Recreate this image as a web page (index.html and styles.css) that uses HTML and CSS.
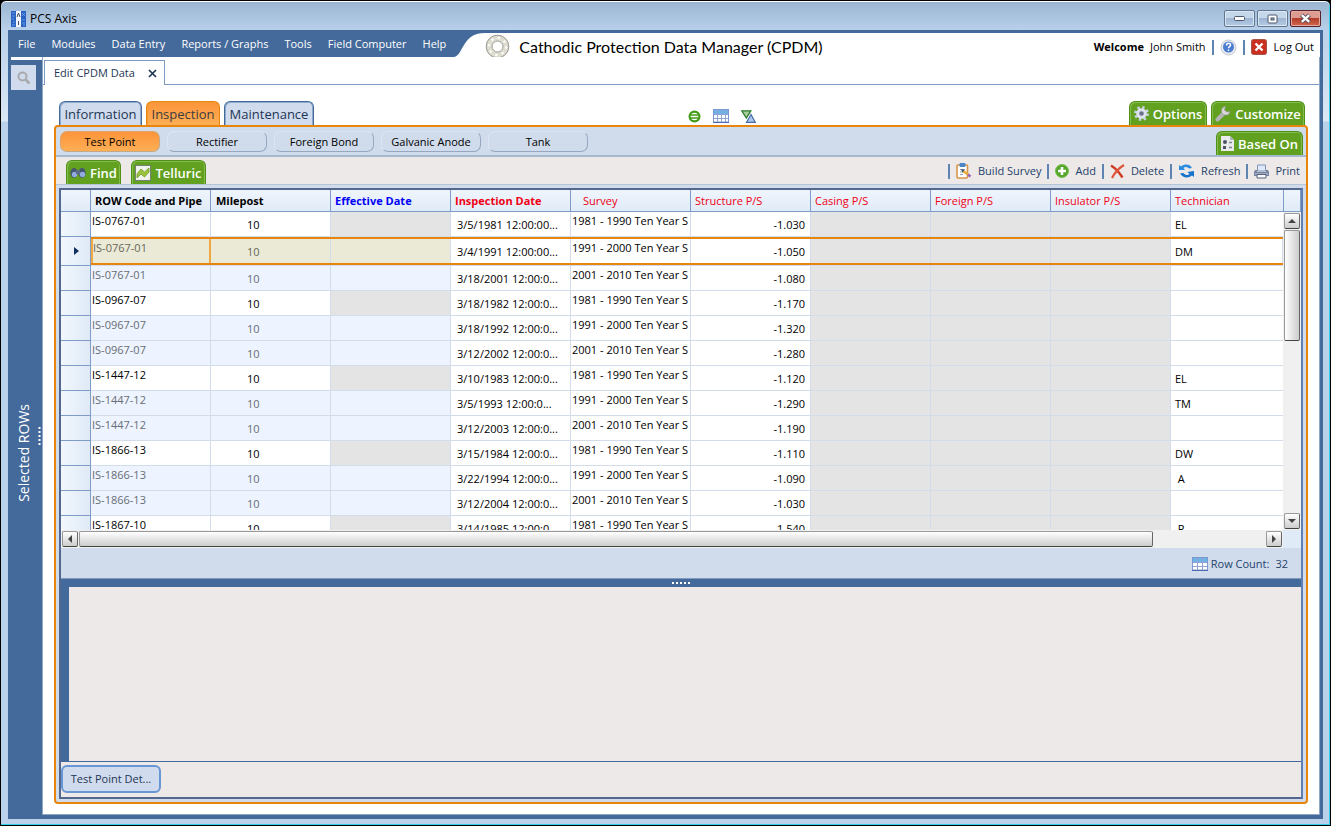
FILE: index.html
```html
<!DOCTYPE html>
<html lang="en">
<head>
<meta charset="utf-8">
<title>PCS Axis</title>
<link rel="stylesheet" href="styles.css">
</head>
<body>
<div class="window">
  <div class="titlebar">
    <svg class="app-icon" width="15" height="16" viewBox="0 0 15 16"><rect width="15" height="16" fill="#2a62c4"/><path d="M5 0h5v16H5z" fill="#f2f5fb"/><path d="M1 2h3M1 5h3M1 8h2M2 11h2M1 14h3M11 2l3 3M14 2l-3 3M11 9h3M11 12h3M12 14h2" stroke="#7fb2f0" stroke-width=".7"/><path d="M6 6l1.500-4L9 6M7.500 10v4" stroke="#444b5c" fill="none"/></svg>
    <span class="window-title">PCS Axis</span>
    <div class="window-buttons">
      <button class="win-btn" aria-label="Minimize"><svg width="12" height="6"><rect x=".5" y=".5" width="10" height="4" rx="1" fill="#fff" stroke="#4b5668"/></svg></button>
      <button class="win-btn" aria-label="Maximize"><svg width="12" height="10"><rect x="1" y="1" width="9" height="8" rx="1" fill="#fff" stroke="#4b5668"/><rect x="4" y="4" width="3" height="2" fill="#9db6d6" stroke="#4b5668"/></svg></button>
      <button class="win-btn win-close" aria-label="Close"><svg width="13" height="11" viewBox="0 0 13 11"><path d="M2.500 2l8 7M10.500 2l-8 7" stroke="#4e4a57" stroke-width="4.200"/><path d="M2.800 2.200l7.400 6.600M10.200 2.200L2.800 8.800" stroke="#fff" stroke-width="2.400"/></svg></button>
    </div>
  </div>

  <div class="app">
    <header class="header">
      <nav class="menu">
        <a href="#">File</a><a href="#">Modules</a><a href="#">Data Entry</a><a href="#">Reports / Graphs</a><a href="#">Tools</a><a href="#">Field Computer</a><a href="#">Help</a>
      </nav>
      <svg class="menu-curve" width="34" height="24" viewBox="0 0 34 24"><path d="M0 24h3C8 23 9 18 13 12 18 4 23 0 34 0H0z" fill="#446a9b"/></svg>
      <svg class="flange" width="25" height="25" viewBox="0 0 25 25"><circle cx="12.500" cy="12.500" r="8.500" fill="none" stroke="#dddccf" stroke-width="6"/><circle cx="12.500" cy="12.500" r="11.300" fill="none" stroke="#9a9a94"/><circle cx="12.500" cy="12.500" r="5.500" fill="#fff" stroke="#9a9a94"/><circle cx="12.500" cy="12.500" r="8.500" fill="none" stroke="#fff" stroke-width="2.200" stroke-dasharray="2.200 4.476"/></svg>
      <h1>Cathodic Protection Data Manager (CPDM)</h1>
      <div class="account">
        <strong>Welcome</strong><span>John Smith</span><i class="sep"></i>
        <button class="plain" aria-label="Help"><svg width="17" height="17" viewBox="0 0 17 17"><circle cx="8.500" cy="8.500" r="7.500" fill="#e9ebf1" stroke="#c3c7d1"/><circle cx="8.500" cy="8" r="5.500" fill="#4a7cd0"/><path d="M6.500 6.500c0-3 4-2.800 4-.5 0 1.700-2 1.500-2 3.300M8.500 10.500v1.500" stroke="#fff" stroke-width="1.500" fill="none"/></svg></button>
        <i class="sep"></i>
        <button class="plain logout"><svg width="16" height="16" viewBox="0 0 16 16"><rect x=".5" y=".5" width="15" height="15" rx="2" fill="#c9301f" stroke="#a5544a"/><path d="M4.500 4.500l7 7M11.500 4.500l-7 7" stroke="#fff" stroke-width="2.400"/></svg>Log Out</button>
      </div>
    </header>

    <div class="body">
      <aside class="sidebar">
        <button class="search" aria-label="Search"><svg width="14" height="14" viewBox="0 0 14 14"><circle cx="5.500" cy="5.500" r="4" fill="none" stroke="#a9a9ad" stroke-width="2"/><path d="M8.500 8.500l4 4" stroke="#a9a9ad" stroke-width="2.500"/></svg></button>
        <div class="side-label">Selected ROWs</div>
        <svg class="side-grip" width="3" height="18"><path d="M1.500 0v18" stroke="#fff" stroke-width="2" stroke-dasharray="2 2"/></svg>
      </aside>

      <main class="main">
        <div class="doc-tabs"><div class="doc-tab"><span>Edit CPDM Data</span><button class="plain" aria-label="Close tab"><svg width="9" height="9" viewBox="0 0 9 9"><path d="M1 1l7 7M8 1L1 8" stroke="#1e3554" stroke-width="1.700"/></svg></button></div></div>
        <div class="content">
          <div class="section-row">
            <button class="section-tab">Information</button>
            <button class="section-tab selected">Inspection</button>
            <button class="section-tab wide">Maintenance</button>
            <div class="view-icons">
              <button class="plain" aria-label="Equal filter"><svg width="13" height="13" viewBox="0 0 13 13"><circle cx="6.500" cy="6.500" r="4.900" fill="#fff" stroke="#3f9a12" stroke-width="2.200"/><path d="M3 5h7M3 8h7" stroke="#3f9a12" stroke-width="1.600"/></svg></button>
              <button class="plain" aria-label="Grid"><svg width="16" height="14" viewBox="0 0 16 14"><rect x=".5" y=".5" width="15" height="12.500" fill="#fff" stroke="#7c98d2"/><path d="M1 1h14v4H1z" fill="#6fb2e6"/><path d="M4.500 1v12M8.500 1v12M12.500 1v12M1 5.500h14M1 9.500h14" stroke="#8ea5d4"/><path d="M0 13.500h16" stroke="#5069b0"/></svg></button>
              <button class="plain" aria-label="Sort"><svg width="15" height="13" viewBox="0 0 15 13"><path d="M.8.800h9L5.300 8z" fill="#a7cf9c" stroke="#2d7a2b" stroke-width="1.300"/><path d="M5.500 12.300h8.700L10 4.500z" fill="#aac8ef" stroke="#486aa5" stroke-width="1.200"/></svg></button>
            </div>
            <button class="green-tab options"><svg width="15" height="15" viewBox="0 0 15 15"><circle cx="7.500" cy="7.500" r="6" fill="none" stroke="#c9cfe2" stroke-width="3" stroke-dasharray="2.350 2.350"/><circle cx="7.500" cy="7.500" r="3.800" fill="#6a7186" stroke="#dfe3f1" stroke-width="3"/></svg>Options</button>
            <button class="green-tab customize"><svg width="16" height="16" viewBox="0 0 16 16"><path d="M2.500 13.500L8 8" stroke="#b4b4b4" stroke-width="4" stroke-linecap="round"/><path d="M15 5.500a4.300 4.300 0 1 1-4.500-5L9.500 4l2.500 2z" fill="#d7d7d7" stroke="#8f9590" stroke-width=".7"/></svg>Customize</button>
          </div>

          <section class="panel">
            <div class="sub-row">
              <button class="sub-tab selected">Test Point</button><button class="sub-tab">Rectifier</button><button class="sub-tab">Foreign Bond</button><button class="sub-tab">Galvanic Anode</button><button class="sub-tab">Tank</button>
              <button class="green-tab based"><svg width="13" height="15" viewBox="0 0 13 15"><path d="M0 0h9l4 4v11H0z" fill="#e8eaec"/><path d="M9 0v4h4" fill="#aab3bd"/><circle cx="4" cy="6" r="2" fill="#4c5361"/><path d="M2 10h3v3H2z" fill="#4c5361"/><path d="M8 6.500h3M8 11.500h3" stroke="#7a8795" stroke-width="1.500"/></svg>Based On</button>
            </div>
            <div class="toolbar">
              <button class="green-tab find"><svg width="16" height="12" viewBox="0 0 16 12"><ellipse cx="4" cy="6" rx="3.600" ry="5" fill="#46566f"/><ellipse cx="12" cy="6" rx="3.600" ry="5" fill="#46566f"/><circle cx="4.500" cy="7.500" r="2.700" fill="#90abe0"/><circle cx="12.500" cy="7.500" r="2.700" fill="#90abe0"/><path d="M6 3h4v4H6z" fill="#5b6c88"/></svg>Find</button>
              <button class="green-tab telluric"><svg width="16" height="16" viewBox="0 0 16 16"><rect x=".5" y=".5" width="15" height="15" fill="#f0f2ec" stroke="#777f76"/><path d="M2 9l4-5 3.500 3L14 3v4l-4.500 5L6 9l-4 4z" fill="#9cc43c" stroke="#6d9c24" stroke-width=".8"/></svg>Telluric</button>
              <div class="actions">
                <i class="sep"></i>
                <button class="action"><svg width="16" height="16" viewBox="0 0 16 16"><rect x="1" y="2" width="10.500" height="13" rx="1" fill="#fff" stroke="#d8944a" stroke-width="1.600"/><rect x="3.500" y="0" width="6" height="4" rx="1" fill="#4a86c8"/><path d="M4 6.500h5M4 9h4M4 11.500h3" stroke="#8da0ba"/><path d="M7 8l5 3.500" stroke="#e9ab37" stroke-width="2.600"/><path d="M5 6l3.500 1L6.500 9.500z" fill="#394b68"/><path d="M12 11.500l2.500 2" stroke="#9d65ba" stroke-width="2.500"/></svg>Build Survey</button>
                <i class="sep"></i>
                <button class="action"><svg width="14" height="14" viewBox="0 0 14 14"><circle cx="7" cy="7" r="6.500" fill="#54a52a" stroke="#78bf50"/><path d="M7 3v8M3 7h8" stroke="#fff" stroke-width="2.600"/></svg>Add</button>
                <i class="sep"></i>
                <button class="action"><svg width="15" height="15" viewBox="0 0 15 15"><path d="M1 1.500C5 4 9 8 12.500 13.500" stroke="#cf3c25" stroke-width="2.400" fill="none"/><path d="M14 1C9 4 5 8 2 14" stroke="#e0563a" stroke-width="2.200" fill="none"/></svg>Delete</button>
                <i class="sep"></i>
                <button class="action"><svg width="17" height="14" viewBox="0 0 17 14"><path d="M1 6V1l2 1.500C7-.5 12 0 14 4l-3 .5C9 2.500 7 2.500 5.500 4L7 6z" fill="#2b8be0"/><path d="M16 7v6l-2-1.500C10 14.500 5 14 2 9.500L5.500 9c2 2.500 4.500 2.500 6 1L9.500 8z" fill="#1573cb"/></svg>Refresh</button>
                <i class="sep"></i>
                <button class="action"><svg width="15" height="15" viewBox="0 0 15 15"><path d="M3.500 1h8v6h-8z" fill="#dce9fb" stroke="#8093b5"/><path d="M1 6h2v2h9V6h2l1 2v4H0V8z" fill="#7785a2"/><path d="M1 10h13" stroke="#c6cede"/><path d="M3 10.500h9V14H3z" fill="#f7f9fd" stroke="#54617f"/></svg>Print</button>
              </div>
            </div>

            <div class="workspace">
              <div class="grid-pane">
                <div class="viewport">
                  <table>
                    <colgroup><col class="c-head"><col><col><col><col><col><col><col><col><col><col class="c-last"></colgroup>
                    <thead><tr><th></th><th class="key">ROW Code and Pipe</th><th class="key mile">Milepost</th><th class="key blue">Effective Date</th><th class="key red">Inspection Date</th><th class="red survey">Survey</th><th class="red">Structure P/S</th><th class="red">Casing P/S</th><th class="red">Foreign P/S</th><th class="red">Insulator P/S</th><th class="red">Technician</th></tr></thead>
                    <tbody>
                    <tr class="first"><th></th><td>IS-0767-01</td><td>10</td><td></td><td>3/5/1981 12:00:00...</td><td>1981 - 1990 Ten Year S</td><td>-1.030</td><td></td><td></td><td></td><td>EL</td></tr>
                    <tr class="current"><th><svg width="5" height="8"><path d="M0 0l5 4-5 4z" fill="#12305e"/></svg></th><td>IS-0767-01</td><td>10</td><td></td><td>3/4/1991 12:00:00...</td><td>1991 - 2000 Ten Year S</td><td>-1.050</td><td></td><td></td><td></td><td>DM</td></tr>
                    <tr><th></th><td>IS-0767-01</td><td>10</td><td></td><td>3/18/2001 12:00:0...</td><td>2001 - 2010 Ten Year S</td><td>-1.080</td><td></td><td></td><td></td><td></td></tr>
                    <tr class="first"><th></th><td>IS-0967-07</td><td>10</td><td></td><td>3/18/1982 12:00:0...</td><td>1981 - 1990 Ten Year S</td><td>-1.170</td><td></td><td></td><td></td><td></td></tr>
                    <tr><th></th><td>IS-0967-07</td><td>10</td><td></td><td>3/18/1992 12:00:0...</td><td>1991 - 2000 Ten Year S</td><td>-1.320</td><td></td><td></td><td></td><td></td></tr>
                    <tr><th></th><td>IS-0967-07</td><td>10</td><td></td><td>3/12/2002 12:00:0...</td><td>2001 - 2010 Ten Year S</td><td>-1.280</td><td></td><td></td><td></td><td></td></tr>
                    <tr class="first"><th></th><td>IS-1447-12</td><td>10</td><td></td><td>3/10/1983 12:00:0...</td><td>1981 - 1990 Ten Year S</td><td>-1.120</td><td></td><td></td><td></td><td>EL</td></tr>
                    <tr><th></th><td>IS-1447-12</td><td>10</td><td></td><td>3/5/1993 12:00:0...</td><td>1991 - 2000 Ten Year S</td><td>-1.290</td><td></td><td></td><td></td><td>TM</td></tr>
                    <tr><th></th><td>IS-1447-12</td><td>10</td><td></td><td>3/12/2003 12:00:0...</td><td>2001 - 2010 Ten Year S</td><td>-1.190</td><td></td><td></td><td></td><td></td></tr>
                    <tr class="first"><th></th><td>IS-1866-13</td><td>10</td><td></td><td>3/15/1984 12:00:0...</td><td>1981 - 1990 Ten Year S</td><td>-1.110</td><td></td><td></td><td></td><td>DW</td></tr>
                    <tr><th></th><td>IS-1866-13</td><td>10</td><td></td><td>3/22/1994 12:00:0...</td><td>1991 - 2000 Ten Year S</td><td>-1.090</td><td></td><td></td><td></td><td>&nbsp;A</td></tr>
                    <tr><th></th><td>IS-1866-13</td><td>10</td><td></td><td>3/12/2004 12:00:0...</td><td>2001 - 2010 Ten Year S</td><td>-1.030</td><td></td><td></td><td></td><td></td></tr>
                    <tr class="first"><th></th><td>IS-1867-10</td><td>10</td><td></td><td>3/14/1985 12:00:0...</td><td>1981 - 1990 Ten Year S</td><td>-1.540</td><td></td><td></td><td></td><td>&nbsp;P</td></tr>
                    </tbody>
                  </table>
                </div>
                <div class="vside">
                  <div class="vhead"></div>
                  <div class="vbar">
                    <button class="sb-btn" aria-label="Scroll up"><svg width="8" height="4"><path d="M0 4l4-4 4 4z" fill="#444"/></svg></button>
                    <div class="vthumb"></div>
                    <button class="sb-btn end" aria-label="Scroll down"><svg width="8" height="4"><path d="M0 0h8L4 4z" fill="#444"/></svg></button>
                  </div>
                </div>
                <div class="hbar">
                  <button class="sb-btn" aria-label="Scroll left"><svg width="4" height="8"><path d="M4 0v8L0 4z" fill="#444"/></svg></button>
                  <div class="hthumb"></div>
                  <button class="sb-btn end" aria-label="Scroll right"><svg width="4" height="8"><path d="M0 0l4 4-4 4z" fill="#444"/></svg></button>
                </div>
                <div class="corner"></div>
              </div>
              <div class="status"><svg width="16" height="14" viewBox="0 0 16 14"><rect x=".5" y=".5" width="15" height="12.500" fill="#fff" stroke="#7c98d2"/><path d="M1 1h14v4H1z" fill="#6fb2e6"/><path d="M5.500 1v12M10.500 1v12M1 5.500h14M1 9.500h14" stroke="#8ea5d4"/><path d="M0 13.500h16" stroke="#5069b0"/></svg><span>Row Count:</span><span class="count">32</span></div>
              <div class="splitter"><svg width="18" height="2"><path d="M0 1h18" stroke="#fff" stroke-width="2" stroke-dasharray="2 2"/></svg></div>
              <div class="detail"></div>
              <div class="detail-tabs"><button class="detail-tab">Test Point Det...</button></div>
            </div>
          </section>
        </div>
      </main>
    </div>
  </div>
</div>
</body>
</html>
```
FILE: styles.css
```css
* { box-sizing: border-box; }
body {
  margin: 0;
  background: #000;
  font: 11px/16px "Open Sans", "Noto Sans", sans-serif;
  color: #000;
}
button { font: inherit; color: inherit; margin: 0; padding: 0; cursor: pointer; }
svg { display: block; flex: none; }
.plain { border: 0; background: none; }

.window {
  display: flex;
  flex-direction: column;
  min-height: 100vh;
  padding: 0 7px 6px 7px;
  background: linear-gradient(#9ab4d1, #b9d1ea 30px, #dce8f5 120px, #b9d1ea 121px);
  border: 1px solid #000;
  border-radius: 6px 6px 0 0;
  box-shadow: inset 0 1px #fff, inset -1px -1px #2fd0ea;
}
.titlebar { display: flex; align-items: center; height: 29px; padding: 6px 2px 0 3px; }
.app-icon { margin-right: 4px; }
.window-title { font-size: 12px; }
.window-buttons { display: flex; gap: 2px; margin-left: auto; }
.win-btn {
  display: flex;
  align-items: center;
  justify-content: center;
  width: 31px;
  height: 17px;
  border: 1px solid #62768f;
  border-radius: 2px;
  background: linear-gradient(#c5d7ea 45%, #9bb3ce 46%, #b4cce6);
  box-shadow: inset 0 0 0 1px #d9e6f4;
}
.win-close {
  border-color: #57202a;
  background: linear-gradient(#dc9c92 45%, #b13a27 46%, #d0694f);
  box-shadow: inset 0 0 0 1px #e2aaa0;
}

.app {
  display: flex;
  flex-direction: column;
  flex: 1;
  padding: 3px 3px 4px 0;
  background: #446a9b;
}
.header { display: flex; height: 24px; background: #fff; }
.menu {
  display: flex;
  gap: 16px;
  padding: 3px 5px 0 10px;
  background: #446a9b;
}
.menu a { color: #fff; text-decoration: none; white-space: nowrap; }
.flange { margin: 1px 9px 0 0; }
h1 {
  margin: 0;
  font: 400 16px/28px "Lato", "Open Sans", sans-serif;
  white-space: nowrap;
}
.account { display: flex; align-items: center; gap: 6px; margin-left: auto; padding: 4px 6px 0 0; white-space: nowrap; }
.sep { width: 2px; height: 15px; background: #6084b2; }
.logout { display: flex; align-items: center; gap: 7px; }

.body { display: flex; flex: 1; }
.sidebar {
  display: flex;
  flex-direction: column;
  position: relative;
  width: 34px;
  padding: 8px 6px 0 3px;
  background: linear-gradient(#fff, #fff) 3px 0 / 100% 3px no-repeat;
}
.search {
  display: flex;
  align-items: center;
  justify-content: center;
  width: 25px;
  height: 25px;
  border: 0;
  background: #d0dcee;
}
.side-label {
  margin: auto;
  writing-mode: vertical-rl;
  transform: rotate(180deg);
  font-size: 14px;
  color: #fff;
}
.side-grip { position: absolute; right: 1px; top: 50%; transform: translateY(-50%); }

.main {
  display: flex;
  flex-direction: column;
  flex: 1;
  min-width: 0;
  background: #fff;
  border: 1px solid #8ea5c6;
  border-top: 0;
}
.doc-tabs { display: flex; align-items: flex-end; height: 28px; padding-left: 1px; border-bottom: 1px solid #7f9bc3; }
.doc-tab {
  display: flex;
  align-items: center;
  gap: 13px;
  height: 25px;
  margin-bottom: -1px;
  padding: 0 7px 0 9px;
  border: 1px solid #7f9bc3;
  border-bottom: 0;
  background: #fff;
  color: #1e3554;
}
.content { display: flex; flex-direction: column; flex: 1; padding: 16px 11px 10px; }

.section-row { display: flex; align-items: flex-end; gap: 4px; height: 24px; padding: 0 3px 0 5px; }
.section-tab {
  width: 83px;
  height: 24px;
  border: 1px solid #446a9b;
  border-bottom: 0;
  border-radius: 6px 6px 0 0;
  background: #d0dcee;
  box-shadow: inset 1px 1px #8fabcc, inset -1px 0 #8fabcc;
  font-size: 13px;
  line-height: 24px;
  color: #1e3554;
}
.section-tab.selected {
  width: 74px;
  border-color: #e8850c;
  background: linear-gradient(#fc943a, #feaf56);
  box-shadow: inset 1px 1px #f59a35;
  color: #3c3c40;
}
.section-tab.wide { width: 90px; }
.view-icons { display: flex; align-items: center; gap: 12px; margin: auto; padding-top: 6px; }
.green-tab {
  display: flex;
  align-items: center;
  justify-content: center;
  gap: 4px;
  height: 24px;
  border: 1px solid #4f9116;
  border-bottom: 0;
  border-radius: 6px 6px 0 0;
  background: #62a01f;
  box-shadow: inset 1px 1px #86bb50, inset -1px 0 #86bb50;
  color: #fff;
  font-size: 13px;
  font-weight: 600;
  white-space: nowrap;
}
.options { width: 78px; }
.customize { width: 94px; }
.based { width: 87px; margin: 0 3px 0 auto; }
.find { width: 55px; }
.telluric { width: 75px; }

.panel {
  display: flex;
  flex-direction: column;
  flex: 1;
  border: 2px solid #e8850c;
  border-radius: 4px;
  background: #d0dcec;
}
.sub-row { display: flex; align-items: flex-end; gap: 7px; height: 30px; padding-left: 4px; border-bottom: 2px solid #a5b9cf; }
.sub-tab {
  width: 100px;
  height: 21px;
  margin-bottom: 3px;
  border: 1px solid;
  border-color: #dbe5f3 #95a8bf #95a8bf #dbe5f3;
  border-radius: 7px;
  background: #d0dcec;
  line-height: 19px;
}
.sub-tab.selected { border-color: #dda467 #c5a987 #c5a987 #dda467; background: linear-gradient(#fc943a, #feaf56); }
.toolbar {
  display: flex;
  align-items: flex-end;
  gap: 10px;
  height: 28px;
  padding-left: 10px;
  background: #ece9e8;
  border-bottom: 1px solid #b6c6d8;
}
.actions { display: flex; align-items: center; gap: 6px; margin-left: auto; padding: 0 6px 5px 0; }
.action { display: flex; align-items: center; gap: 6px; border: 0; background: none; color: #24416a; white-space: nowrap; }

.workspace {
  display: flex;
  flex-direction: column;
  flex: 1;
  margin: 3px;
  border: 2px solid;
  border-color: #54688f #6080b4 #54688f #54688f;
}
.grid-pane { display: grid; grid-template: 340px 18px / minmax(0, 1fr) 18px; }
.viewport { overflow: hidden; background: #fff; }
table { width: 100%; table-layout: fixed; border-collapse: separate; border-spacing: 0; }
col { width: 120px; }
.c-head { width: 30px; }
.c-last { width: auto; }
th {
  padding: 0 0 0 4px;
  border-right: 1px solid #7f9cc8;
  border-bottom: 1px solid #7f9cc8;
  background: linear-gradient(#eff5fc, #e0ebf8);
  font-weight: 400;
  text-align: left;
  white-space: nowrap;
  overflow: hidden;
}
thead th { height: 22px; }
.key { font-weight: 700; }
.mile { padding-left: 5px; }
.survey { padding-left: 12px; }
.blue { color: #0000f5; }
.red { color: #f00014; }
tbody th { background: linear-gradient(90deg, #f2f7fd, #dfeaf7); padding-left: 13px; }
td {
  height: 25px;
  padding: 2px 4px 0;
  border-right: 1px solid #d2dcea;
  border-bottom: 1px solid #d2dcea;
  white-space: nowrap;
  overflow: hidden;
  background: #fff;
}
td:nth-child(2), td:nth-child(3), td:nth-child(4) { background: #edf4ff; color: #686c74; }
.first td:nth-child(2), .first td:nth-child(3) { background: #fff; color: #000; }
.first td:nth-child(4), td:nth-child(8), td:nth-child(9), td:nth-child(10) { background: #e4e4e4; }
td:nth-child(2), td:nth-child(6) { padding: 1px 0 0 1px; vertical-align: top; }
td:nth-child(3) { padding-left: 36px; }
td:nth-child(5) { padding-left: 6px; }
td:nth-child(7) { padding-right: 5px; text-align: right; }
tbody td:last-child, thead th:last-child { border-right: 0; }
.current td {
  height: 29px;
  border-right: 0;
  box-shadow: inset 0 2px #e8850c, inset 0 -2px #e8850c, inset -1px 0 #d2dcea;
}
.current td:nth-child(7) { padding-right: 6px; }
.current td:nth-child(-n+4) { background: #eaead6; color: #68675a; }
.current td:nth-child(2) { padding-left: 2px; box-shadow: inset 0 2px #e8850c, inset 0 -2px #e8850c, inset 2px 0 #efa842, inset -2px 0 #efa842; }
.current td:nth-child(2), .current td:nth-child(6) { padding-top: 3px; }

.vside { display: flex; flex-direction: column; }
.vhead { height: 22px; border: 1px solid #7f9cc8; border-width: 0 1px 1px; background: linear-gradient(#eff5fc, #e0ebf8); }
.vbar, .hbar { display: flex; background: #f0f0f0; gap: 1px; }
.vbar { flex-direction: column; flex: 1; padding: 1px; }
.hbar { padding: 1px; }
.sb-btn, .vthumb, .hthumb { border: 1px solid #999; border-bottom-color: #444; border-right-color: #666; border-radius: 2px; }
.sb-btn { display: flex; align-items: center; justify-content: center; width: 16px; height: 16px; background: linear-gradient(#fff, #ccc); }
.sb-btn.end { margin: auto 0 0; }
.vthumb { height: 111px; background: linear-gradient(90deg, #fff, #ccc); }
.hthumb { width: 88%; height: 16px; background: linear-gradient(#fff, #ccc); }
.hbar .sb-btn.end { margin: 0 0 0 auto; }
.corner { background: #e0ebf8; }

.status { display: flex; align-items: center; height: 30px; padding: 1px 13px 0 0; justify-content: flex-end; background: #d0dcec; color: #24416a; }
.status span { margin-left: 3px; }
.status .count { margin-left: 6px; }
.splitter { display: flex; align-items: center; justify-content: center; height: 9px; border-top: 1px solid #7f9cc0; background: #446a9b; }
.detail { flex: 1; background: #ece9e8; border-left: 8px solid #446a9b; border-bottom: 1px solid #446a9b; }
.detail-tabs { height: 35px; padding-top: 3px; background: #ece9e8; }
.detail-tab { width: 100px; height: 28px; border: 2px solid #6895d3; border-radius: 6px; background: #d0dcee; color: #1e3554; }
```
